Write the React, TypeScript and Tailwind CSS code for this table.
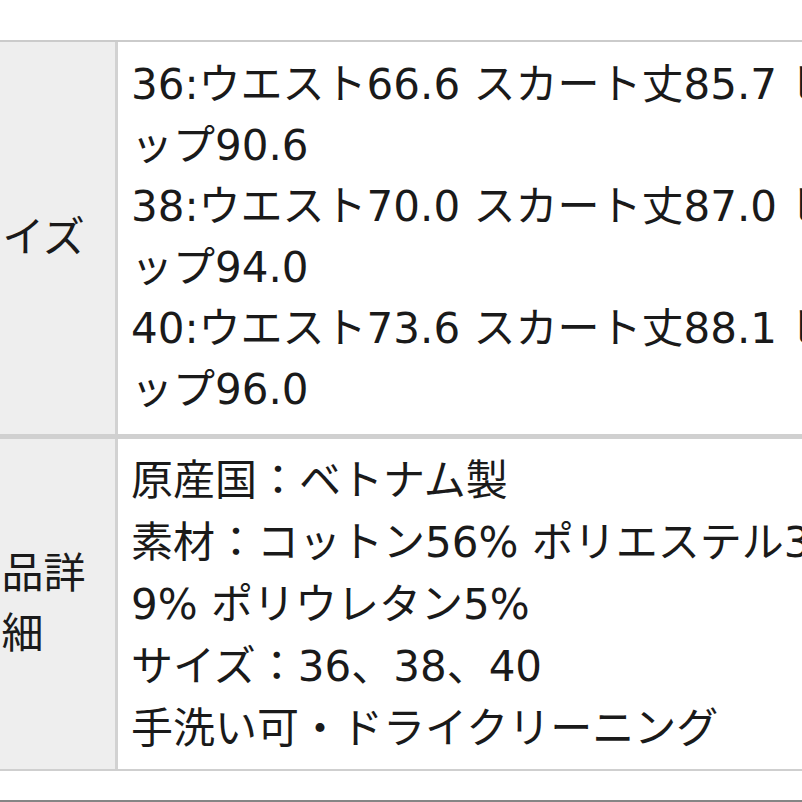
import React from 'react';

const font = { fontFamily: '"DejaVu Sans", "Noto Sans CJK JP", sans-serif' };

const sizeLines = [
  '36:ウエスト66.6 スカート丈85.7 ヒ',
  'ップ90.6',
  '38:ウエスト70.0 スカート丈87.0 ヒ',
  'ップ94.0',
  '40:ウエスト73.6 スカート丈88.1 ヒ',
  'ップ96.0',
];

const detailLines = [
  '原産国：ベトナム製',
  '素材：コットン56% ポリエステル3',
  '9% ポリウレタン5%',
  'サイズ：36、38、40',
  '手洗い可・ドライクリーニング',
];

export default function App() {
  return (
    <div className="w-[802px] h-[802px] overflow-hidden bg-white text-[#1a1a1a] relative" style={font}>
      <div className="h-[40px]" />
      <div className="-ml-[70px] w-[1000px] border-t-2 border-[#cbcbcb]">
        {/* サイズ */}
        <div className="flex border-b-[5px] border-[#d0d0d0]">
          <div className="w-[188px] shrink-0 bg-[#eeeeee] border-r-[3px] border-[#d2d2d2] flex items-center justify-center px-[12px] text-center text-[42px] leading-[60px]">
            サイズ
          </div>
          <div className="flex-1 pl-[13px] pt-[12px] pb-[14px] text-[42px] leading-[61px] whitespace-nowrap">
            {sizeLines.map((l, i) => (
              <div key={i}>{l}</div>
            ))}
          </div>
        </div>

        {/* 商品詳細 */}
        <div className="flex border-b-2 border-[#cfcfcf]">
          <div className="w-[188px] shrink-0 bg-[#eeeeee] border-r-[3px] border-[#d2d2d2] flex items-center justify-center px-[12px] text-center text-[42px] leading-[60px]">
            商品詳細
          </div>
          <div className="flex-1 pl-[13px] pt-[11px] pb-[9px] text-[42px] leading-[62px] whitespace-nowrap">
            {detailLines.map((l, i) => (
              <div key={i}>{l}</div>
            ))}
          </div>
        </div>
      </div>
      <div className="absolute left-0 right-0 bottom-0 h-[2px] bg-[#858585]" />
    </div>
  );
}
